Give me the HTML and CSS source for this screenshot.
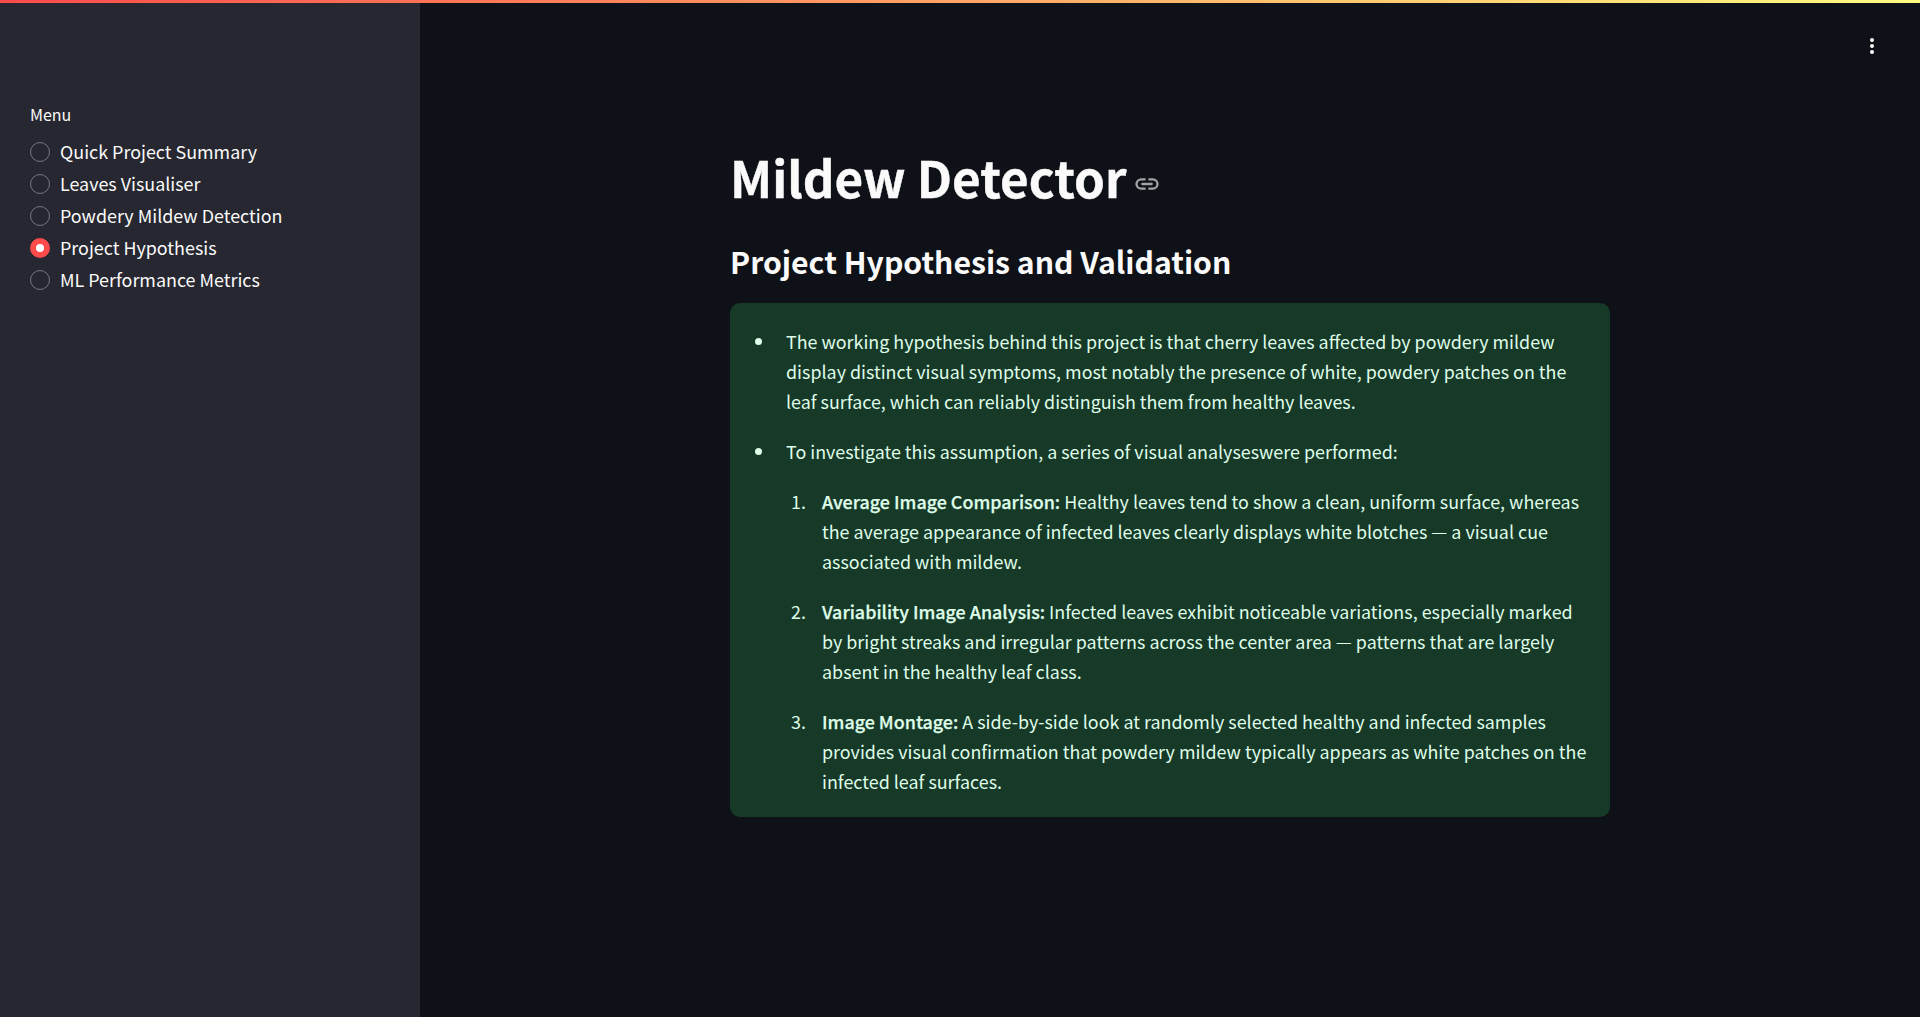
FILE: index.html
```html
<!DOCTYPE html>
<html lang="en">
<head>
<meta charset="utf-8">
<title>Mildew Detector</title>
<link rel="stylesheet" href="styles.css">
</head>
<body>
<div class="topbar"></div>
<div class="app">
  <aside class="sidebar">
    <div class="menu-label">Menu</div>
    <div class="radio-group">
      <div class="radio"><span class="dot"></span><span class="radio-text">Quick Project Summary</span></div>
      <div class="radio"><span class="dot"></span><span class="radio-text">Leaves Visualiser</span></div>
      <div class="radio"><span class="dot"></span><span class="radio-text">Powdery Mildew Detection</span></div>
      <div class="radio"><span class="dot on"></span><span class="radio-text">Project Hypothesis</span></div>
      <div class="radio"><span class="dot"></span><span class="radio-text">ML Performance Metrics</span></div>
    </div>
  </aside>
  <main class="main">
    <svg class="kebab" width="24" height="24" viewBox="0 0 24 24" fill="#fafafa"><circle cx="12" cy="6" r="2"/><circle cx="12" cy="12" r="2"/><circle cx="12" cy="18" r="2"/></svg>
    <div class="content">
      <h1 class="title">Mildew Detector<svg class="link-icon" width="28" height="28" viewBox="0 0 24 24" fill="none" stroke="#a3a3a3" stroke-width="2" stroke-linecap="round" stroke-linejoin="round"><path d="M10 8H7a4 4 0 0 0 0 8h3"/><path d="M14 8h3a4 4 0 0 1 0 8h-3"/><path d="M8 12h8"/></svg></h1>
      <h2 class="subtitle">Project Hypothesis and Validation</h2>
      <div class="alert">
        <ul class="bullets">
          <li>The working hypothesis behind this project is that cherry leaves affected by powdery mildew display distinct visual symptoms, most notably the presence of white, powdery patches on the leaf surface, which can reliably distinguish them from healthy leaves.</li>
          <li>To investigate this assumption, a series of visual analyseswere performed:</li>
        </ul>
        <ol class="steps">
          <li><strong>Average Image Comparison:</strong> Healthy leaves tend to show a clean, uniform surface, whereas the average appearance of infected leaves clearly displays white blotches — a visual cue associated with mildew.</li>
          <li><strong>Variability Image Analysis:</strong> Infected leaves exhibit noticeable variations, especially marked by bright streaks and irregular patterns across the center area — patterns that are largely absent in the healthy leaf class.</li>
          <li><strong>Image Montage:</strong> A side-by-side look at randomly selected healthy and infected samples provides visual confirmation that powdery mildew typically appears as white patches on the infected leaf surfaces.</li>
        </ol>
      </div>
    </div>
  </main>
</div>
</body>
</html>
```
FILE: styles.css
```css
* { box-sizing: border-box; }
html, body { margin: 0; height: 100%; }
body {
  background: #0e1117;
  color: #fafafa;
  font-family: "Noto Sans CJK JP", "Source Sans Pro", "Noto Sans", sans-serif;
  overflow: hidden;
}
.topbar {
  position: fixed; top: 0; left: 0; right: 0; height: 3px; z-index: 5;
  background: linear-gradient(90deg, #ff4b4b, #fffd80);
}
.app { display: flex; height: 100%; }
.sidebar {
  width: 420px; flex: none; background: #262730;
  padding: 103px 30px 0;
}
.menu-label { font-size: 16px; line-height: 22px; margin-bottom: 11px; }
.radio-group { display: flex; flex-direction: column; }
.radio { display: flex; align-items: center; gap: 10px; height: 32px; font-size: 17.9px; }
.radio-text { padding-bottom: 2px; }
.dot { width: 20px; height: 20px; border-radius: 50%; border: 1px solid #74767e; flex: none; }
.dot.on { background: #ff4b4b; border: 6px solid #ff4b4b; position: relative; }
.dot.on::after { content: ""; position: absolute; inset: 0; border-radius: 50%; background: #fff; }
.main { flex: 1; position: relative; display: flex; justify-content: center; padding-top: 139px; }
.kebab { position: absolute; top: 34px; right: 36px; }
.content { width: 880px; }
.title { margin: 0; font-size: 49.4px; font-weight: 700; line-height: 76px; display: flex; align-items: center; gap: 6px; -webkit-text-stroke: 0.4px #fafafa; }
.link-icon { margin-top: 14px; }
.subtitle { margin: 24px 0 20px; font-size: 30.2px; font-weight: 700; line-height: 44px; }
.alert {
  background: #173928; color: #dffde9; border-radius: 10px;
  padding: 23px 23px 21px 20px; font-size: 17.9px; line-height: 30px;
}
.bullets, .steps { margin: 0; }
.bullets { padding-left: 26px; }
.bullets li { padding-left: 10px; }
.steps { padding-left: 60px; margin-top: 20px; }
.steps li { padding-left: 12px; }
.bullets li + li, .steps li + li { margin-top: 20px; }
strong { font-weight: 500; -webkit-text-stroke: 0.25px #dffde9; }
```
